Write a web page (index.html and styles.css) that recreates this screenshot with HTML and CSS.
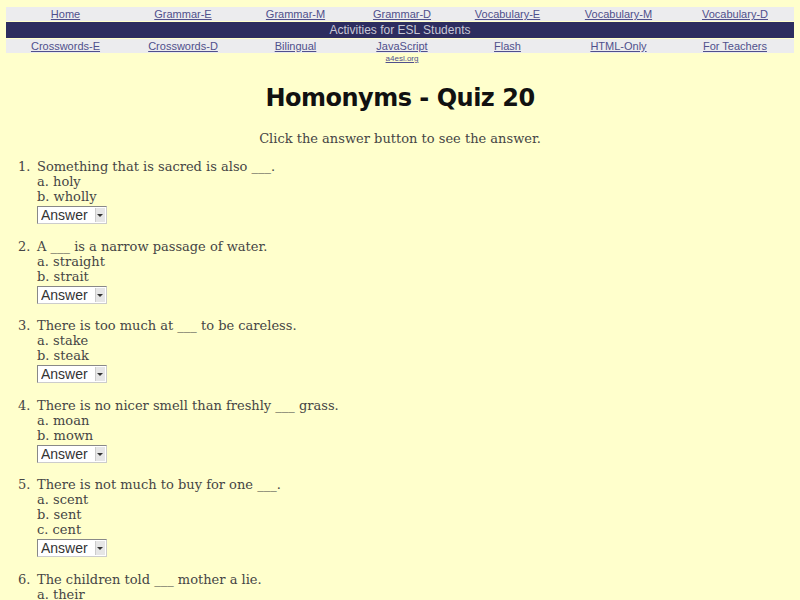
FILE: index.html
```html
<!DOCTYPE html>
<html lang="en">
<head>
<meta charset="utf-8">
<title>Homonyms - Quiz 20</title>
<link rel="stylesheet" href="styles.css">
</head>
<body>
<nav class="nav">
  <div class="nav-row light">
    <a href="#">Home</a>
    <a href="#">Grammar-E</a>
    <a href="#">Grammar-M</a>
    <a href="#">Grammar-D</a>
    <a href="#">Vocabulary-E</a>
    <a href="#">Vocabulary-M</a>
    <a href="#">Vocabulary-D</a>
  </div>
  <div class="nav-banner">Activities for ESL Students</div>
  <div class="nav-row light">
    <a href="#">Crosswords-E</a>
    <a href="#">Crosswords-D</a>
    <a href="#">Bilingual</a>
    <a href="#">JavaScript</a>
    <a href="#">Flash</a>
    <a href="#">HTML-Only</a>
    <a href="#">For Teachers</a>
  </div>
  <div class="nav-row sub">
    <span></span><span></span><span></span>
    <a href="#">a4esl.org</a>
    <span></span><span></span><span></span>
  </div>
</nav>

<h1 class="title">Homonyms - Quiz 20</h1>
<p class="intro">Click the answer button to see the answer.</p>

<ol class="quiz">
  <li>
    <div class="q">Something that is sacred is also ___.</div>
    <div class="opt">a. holy</div>
    <div class="opt">b. wholly</div>
    <span class="ans"><select><option>Answer</option><option>wholly</option></select></span>
  </li>
  <li>
    <div class="q">A ___ is a narrow passage of water.</div>
    <div class="opt">a. straight</div>
    <div class="opt">b. strait</div>
    <span class="ans"><select><option>Answer</option><option>strait</option></select></span>
  </li>
  <li>
    <div class="q">There is too much at ___ to be careless.</div>
    <div class="opt">a. stake</div>
    <div class="opt">b. steak</div>
    <span class="ans"><select><option>Answer</option><option>stake</option></select></span>
  </li>
  <li>
    <div class="q">There is no nicer smell than freshly ___ grass.</div>
    <div class="opt">a. moan</div>
    <div class="opt">b. mown</div>
    <span class="ans"><select><option>Answer</option><option>mown</option></select></span>
  </li>
  <li>
    <div class="q">There is not much to buy for one ___.</div>
    <div class="opt">a. scent</div>
    <div class="opt">b. sent</div>
    <div class="opt">c. cent</div>
    <span class="ans"><select><option>Answer</option><option>cent</option></select></span>
  </li>
  <li>
    <div class="q">The children told ___ mother a lie.</div>
    <div class="opt">a. their</div>
  </li>
</ol>
</body>
</html>
```

FILE: styles.css
```css
html, body {
  margin: 0;
  padding: 0;
}
body {
  background: #ffffcc;
  font-family: "DejaVu Serif", serif;
  color: #454545;
}
.nav {
  margin: 7px 6px 0 6px;
  font-family: "Liberation Sans", Arial, sans-serif;
}
.nav-row {
  display: grid;
  grid-template-columns: 119fr 116fr 109fr 104fr 107fr 115fr 118fr;
  text-align: center;
}
.nav-row.light {
  background: #ececee;
  height: 14px;
  line-height: 14px;
  font-size: 11px;
}
.nav-row.light + .nav-banner {
  margin-top: 1px;
}
.nav-banner + .nav-row.light {
  margin-top: 1px;
}
.nav a {
  color: #50508c;
  text-decoration: underline;
}
.nav-banner {
  background: #2d2d5f;
  color: #c8c8d6;
  font-size: 12px;
  height: 16px;
  line-height: 16px;
  text-align: center;
}
.nav-row.sub {
  font-size: 8px;
  line-height: 10px;
  height: 10px;
  margin-top: 1px;
}
.title {
  font-family: "DejaVu Sans", sans-serif;
  font-weight: bold;
  font-size: 24px;
  letter-spacing: -0.5px;
  color: #111111;
  text-align: center;
  margin: 19px 0 0 0;
  line-height: 30px;
}
.intro {
  text-align: center;
  font-size: 13px;
  line-height: 15px;
  margin: 18px 0 0 0;
}
.quiz {
  margin: 13px 0 0 0;
  padding: 0 0 0 37px;
  font-size: 13px;
  line-height: 15px;
}
.quiz li {
  margin-bottom: 14.5px;
}
.quiz li::marker {
  content: counter(list-item) ".\2002";
}
.ans {
  display: inline-block;
  position: relative;
  margin-top: 2px;
  vertical-align: top;
}
.ans select {
  appearance: none;
  -webkit-appearance: none;
  width: 70px;
  height: 18px;
  margin: 0;
  padding: 0 12px 0 3px;
  border: 1px solid #888888;
  border-right-color: #cccccc;
  border-bottom-color: #cccccc;
  background: #ffffff;
  color: #333333;
  font-family: "Liberation Sans", Arial, sans-serif;
  font-size: 14px;
  line-height: 16px;
}
.ans::after {
  content: "";
  position: absolute;
  right: 2px;
  top: 2px;
  width: 9px;
  height: 14px;
  background: #e6e6e6;
  border-left: 1px solid #cccccc;
  pointer-events: none;
}
.ans::before {
  content: "";
  position: absolute;
  right: 4px;
  top: 8px;
  width: 0;
  height: 0;
  border-left: 3px solid transparent;
  border-right: 3px solid transparent;
  border-top: 3px solid #333333;
  z-index: 1;
  pointer-events: none;
}
```
